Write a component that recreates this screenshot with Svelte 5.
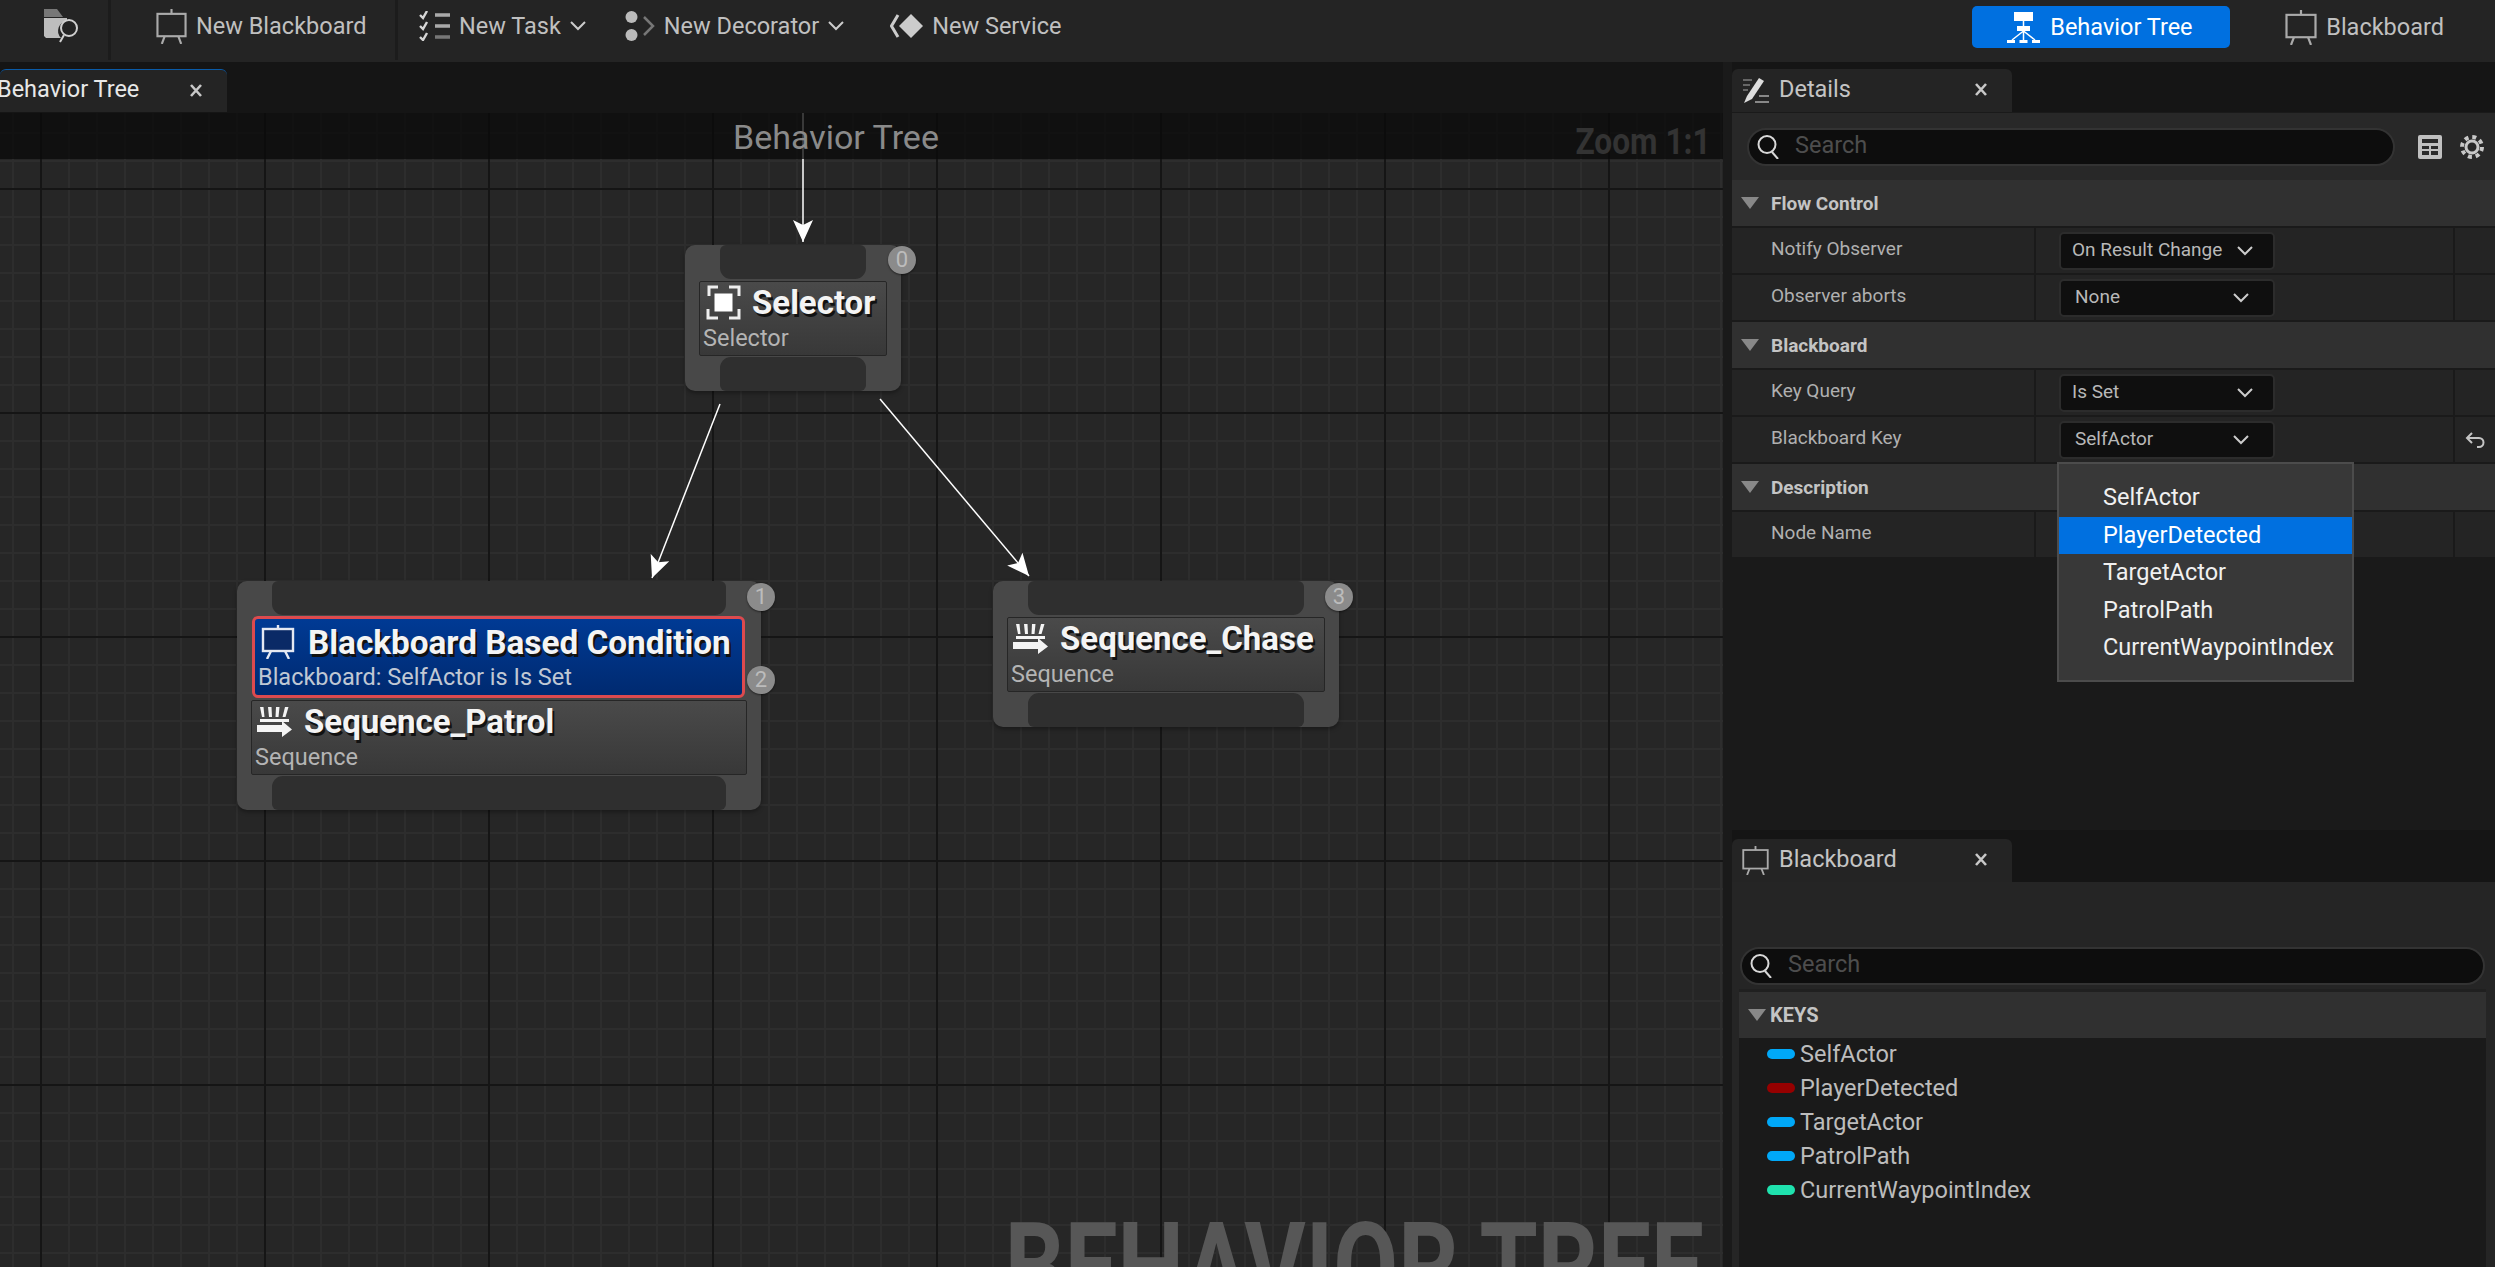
<script>
  const flowRows = [
    { label: "Notify Observer", value: "On Result Change" },
    { label: "Observer aborts", value: "None", alt: true },
  ];
  const bbRows = [
    { label: "Key Query", value: "Is Set" },
    { label: "Blackboard Key", value: "SelfActor", alt: true, reset: true },
  ];

  const options = ["SelfActor", "PlayerDetected", "TargetActor", "PatrolPath", "CurrentWaypointIndex"];

  const keys = [
    { name: "SelfActor", color: "#00a8f8" },
    { name: "PlayerDetected", color: "#960000" },
    { name: "TargetActor", color: "#00a8f8" },
    { name: "PatrolPath", color: "#00a8f8" },
    { name: "CurrentWaypointIndex", color: "#1fe2ae" },
  ];
</script>

{#snippet easel(w, h)}
  <svg width={w} height={h} viewBox="0 0 32 36" preserveAspectRatio="none" fill="none" stroke="#aaa" stroke-width="2.2">
    <path d="M16 0v5" />
    <rect x="1.5" y="5" width="29" height="23" />
    <path d="M9 28l-3 8M23 28l3 8" />
  </svg>
{/snippet}

{#snippet magnifier()}
  <svg width="24" height="24" viewBox="0 0 24 24" fill="none" stroke="#d8d8d8" stroke-width="2">
    <ellipse cx="10" cy="9.500" rx="8.500" ry="8.500" />
    <path d="M15 17l6 7" />
  </svg>
{/snippet}

{#snippet closeMark()}
  <svg class="x" width="12" height="13" viewBox="0 0 12 13" fill="none" stroke="#c8c8c8" stroke-width="2.600">
    <path d="M1 1l10 11M11 1L1 12" />
  </svg>
{/snippet}

{#snippet chevron()}
  <svg width="16" height="10" viewBox="0 0 16 10" fill="none" stroke="#ccc" stroke-width="2"><path d="M1 1l7 7 7-7" /></svg>
{/snippet}

{#snippet sequenceIcon()}
  <svg class="seq" width="35" height="30" viewBox="0 0 35 30" fill="#f4f4f4">
    <path d="M3 0h3.500l1 10H5zM11 0h3.500l.5 10h-3zM19 0h3.500l-1 10h-3zM28 0h3.500l-3 10h-3z" />
    <rect x="3" y="12" width="29" height="3" />
    <path d="M0 18h25v-4l10 8.500-10 7.500v-5H0z" />
  </svg>
{/snippet}

<div class="app">
  <header class="toolbar">
    <div class="tb-group first">
      <svg width="35" height="34" viewBox="0 0 35 34">
        <path d="M0 0h13l6 8H0z" fill="#777" />
        <path d="M0 9h23v3a10 10 0 0 0-6 17H2l-2-2z" fill="#bdbdbd" />
        <circle cx="25" cy="19" r="8" fill="none" stroke="#d0d0d0" stroke-width="2" />
        <path d="M20 26l-4 7" stroke="#d0d0d0" stroke-width="2" />
      </svg>
    </div>
    <div class="tb-group second">
      <button class="tb-btn">
        {@render easel(31, 35)}
        <span>New Blackboard</span>
      </button>
    </div>
    <div class="tb-group rest">
      <button class="tb-btn">
        <svg width="31" height="30" viewBox="0 0 31 30" fill="none">
          <path d="M1 4l3 3 4-7M1 15l3 3 4-7M1 26l3 3 4-7" stroke="#d6d6d6" stroke-width="2.400" />
          <path d="M16 4h15M16 15h15" stroke="#aaa" stroke-width="3.500" />
          <path d="M16 26h15" stroke="#777" stroke-width="3.500" />
        </svg>
        <span>New Task</span>
        {@render chevron()}
      </button>
      <button class="tb-btn">
        <svg width="30" height="30" viewBox="0 0 30 30">
          <circle cx="6.500" cy="6" r="6" fill="#bbb" />
          <circle cx="6.500" cy="24" r="6" fill="#bbb" />
          <path d="M19 6l9 9-9 9" fill="none" stroke="#777" stroke-width="2.500" />
        </svg>
        <span>New Decorator</span>
        {@render chevron()}
      </button>
      <button class="tb-btn service">
        <svg width="33" height="24" viewBox="0 0 33 24">
          <path d="M21 0l12 12-12 12-12-12z" fill="#ccc" />
          <path d="M8 1L1.500 12 8 23" fill="none" stroke="#ccc" stroke-width="3" />
        </svg>
        <span>New Service</span>
      </button>
    </div>
    <div class="modes">
      <button class="mode active">
        <svg width="33" height="31" viewBox="0 0 33 31" fill="#fff">
          <rect x="7" y="0" width="19" height="9" />
          <rect x="10" y="14" width="13" height="5" />
          <path d="M16.500 9v5M16.500 19L5 28M16.500 19v9M16.500 19L28 28" fill="none" stroke="#fff" stroke-width="1.500" />
          <rect x="0" y="28" width="8" height="3" />
          <rect x="12.500" y="28" width="8" height="3" />
          <rect x="25" y="28" width="8" height="3" />
        </svg>
        <span>Behavior Tree</span>
      </button>
      <button class="mode">
        {@render easel(32, 35)}
        <span>Blackboard</span>
      </button>
    </div>
  </header>

  <main class="workspace">
    <section class="graph-col">
      <div class="tabstrip">
        <div class="tab graph-tab">
          <span class="tab-title">Behavior Tree</span>
          {@render closeMark()}
        </div>
      </div>
      <div class="graph">
        <svg class="wires" width="1723" height="1155" viewBox="0 0 1723 1155">
          <defs>
            <marker id="head" markerWidth="24" markerHeight="20" refX="22" refY="10" orient="auto" markerUnits="userSpaceOnUse">
              <path d="M0 0L22 10L0 20L5 10z" fill="#fff" />
            </marker>
          </defs>
          <path d="M803 0V130" stroke="#fff" stroke-width="1.500" marker-end="url(#head)" />
          <path d="M720 292L652 466" stroke="#fff" stroke-width="1.500" marker-end="url(#head)" />
          <path d="M880 287L1029 464" stroke="#fff" stroke-width="1.500" marker-end="url(#head)" />
        </svg>

        <div class="graph-head">
          <span class="graph-title">Behavior Tree</span>
          <span class="zoom">Zoom 1:1</span>
        </div>
        <span class="watermark">BEHAVIOR TREE</span>

        <div class="node selector">
          <div class="slot"></div>
          <div class="inner">
            <div class="title-row">
              <svg class="sel-ic" width="35" height="35" viewBox="0 0 35 35" fill="none" stroke="#eee" stroke-width="3">
                <path d="M3 11V2h9M23 2h10v9M2 24v9h10M23 33h10v-9" />
                <rect x="8.500" y="8.500" width="18" height="18" fill="#fff" stroke="none" />
              </svg>
              <span class="title">Selector</span>
            </div>
            <div class="sub">Selector</div>
          </div>
          <div class="slot"></div>
          <span class="badge">0</span>
        </div>

        <div class="node patrol">
          <div class="slot"></div>
          <div class="deco">
            <div class="title-row">
              <svg class="deco-ic" width="34" height="34" viewBox="0 0 34 34" fill="#0a2a66" stroke="#e4e8f2" stroke-width="2.400">
                <path d="M17 0v4" />
                <rect x="2" y="4" width="30" height="22" />
                <path d="M10 26l-4 8M24 26l4 8" />
              </svg>
              <span class="title">Blackboard Based Condition</span>
            </div>
            <div class="sub">Blackboard: SelfActor is Is Set</div>
          </div>
          <div class="inner">
            <div class="title-row">
              {@render sequenceIcon()}
              <span class="title">Sequence_Patrol</span>
            </div>
            <div class="sub">Sequence</div>
          </div>
          <div class="slot"></div>
          <span class="badge">1</span>
          <span class="badge second-badge">2</span>
        </div>

        <div class="node chase">
          <div class="slot"></div>
          <div class="inner">
            <div class="title-row">
              {@render sequenceIcon()}
              <span class="title">Sequence_Chase</span>
            </div>
            <div class="sub">Sequence</div>
          </div>
          <div class="slot"></div>
          <span class="badge">3</span>
        </div>
      </div>
    </section>

    <aside class="side">
      <section class="details">
        <div class="tabstrip">
          <div class="tab side-tab">
            <svg width="27" height="26" viewBox="0 0 27 26" fill="none">
              <path d="M1 2h9M1 7h7M1 12h5" stroke="#666" stroke-width="1.800" />
              <path d="M5 18L17 0l5 3-12 18-8 4z" fill="#ddd" />
              <path d="M13 24h14M17 18h10" stroke="#888" stroke-width="1.800" />
            </svg>
            <span class="tab-title">Details</span>
            {@render closeMark()}
          </div>
        </div>
        <div class="panel">
          <div class="search-row">
            <div class="search">
              {@render magnifier()}
              <span>Search</span>
            </div>
            <svg width="24" height="24" viewBox="0 0 24 24">
              <rect width="24" height="24" rx="2" fill="#c0c0c0" />
              <path d="M4 4h16v4H4zM4 11h7v3H4zM13 11h7v3h-7zM4 16h7v4H4zM13 16h7v4h-7z" fill="#2a2a2a" />
            </svg>
            <svg class="gear" width="26" height="26" viewBox="0 0 26 26" fill="none" stroke="#c8c8c8">
              <circle cx="13" cy="13" r="6" stroke-width="3" />
              <circle cx="13" cy="13" r="10" stroke-width="4" stroke-dasharray="4 3.850" />
            </svg>
          </div>

          <div class="cat"><i class="tri"></i>Flow Control</div>
          {#each flowRows as row}
            <div class="row">
              <div class="r-label">{row.label}</div>
              <div class="r-value"><div class="combo" class:alt={row.alt}><span>{row.value}</span>{@render chevron()}</div></div>
              <div class="r-reset"></div>
            </div>
          {/each}

          <div class="cat"><i class="tri"></i>Blackboard</div>
          {#each bbRows as row}
            <div class="row">
              <div class="r-label">{row.label}</div>
              <div class="r-value"><div class="combo" class:alt={row.alt}><span>{row.value}</span>{@render chevron()}</div></div>
              <div class="r-reset">
                {#if row.reset}
                  <svg width="20" height="16" viewBox="0 0 20 16" fill="none" stroke="#c4c4c4" stroke-width="2"><path d="M7 1L2 6l5 5M2 6h12a4.500 4.500 0 0 1 0 9h-2" /></svg>
                {/if}
              </div>
            </div>
          {/each}

          <div class="cat"><i class="tri"></i>Description</div>
          <div class="row">
            <div class="r-label">Node Name</div>
            <div class="r-value"></div>
            <div class="r-reset"></div>
          </div>
        </div>

        <div class="dropdown">
          {#each options as opt, i}
            <div class="opt" class:sel={i === 1}>{opt}</div>
          {/each}
        </div>
      </section>

      <section class="blackboard-panel">
        <div class="tabstrip tall">
          <div class="tab side-tab">
            {@render easel(26, 29)}
            <span class="tab-title">Blackboard</span>
            {@render closeMark()}
          </div>
        </div>
        <div class="bb-body">
          <div class="bb-search">
            <div class="search">
              {@render magnifier()}
              <span>Search</span>
            </div>
          </div>
          <div class="bb-list">
            <div class="cat keys"><i class="tri"></i>KEYS</div>
            {#each keys as key}
              <div class="key">
                <i class="pill" style="background: {key.color}"></i>
                <span>{key.name}</span>
              </div>
            {/each}
          </div>
        </div>
      </section>
    </aside>
  </main>
</div>

<style>
  :global(body) {
    margin: 0;
    background: #151515;
  }
  .app {
    width: 2495px;
    height: 1267px;
    overflow: hidden;
    display: flex;
    flex-direction: column;
    font-family: Roboto, "Liberation Sans", sans-serif;
    color: #c0c0c0;
    background: #151515;
  }
  button {
    background: none;
    border: 0;
    padding: 0;
    font: inherit;
    color: inherit;
  }

  /* top bar */
  .toolbar {
    height: 62px;
    flex: none;
    display: flex;
    background: #242424;
    align-items: flex-start;
  }
  .tb-group {
    display: flex;
    align-items: center;
    height: 60px;
    box-sizing: border-box;
    padding-bottom: 8px;
  }
  .tb-group.first {
    width: 111px;
    padding-left: 44px;
    border-right: 3px solid #1c1c1c;
  }
  .tb-group.second {
    width: 287px;
    padding-left: 45px;
    border-right: 3px solid #1c1c1c;
  }
  .tb-group.rest {
    padding-left: 21px;
    gap: 39px;
  }
  .tb-btn {
    display: flex;
    align-items: center;
    gap: 9px;
    font-size: 23.500px;
    color: #c0c0c0;
    white-space: nowrap;
  }
  .tb-btn.service {
    margin-left: 7px;
  }
  .modes {
    margin-left: auto;
    display: flex;
    align-items: center;
    gap: 55px;
    padding: 6px 51px 0 0;
  }
  .mode {
    display: flex;
    align-items: center;
    gap: 9px;
    font-size: 23.500px;
    height: 42px;
    color: #c0c0c0;
  }
  .mode.active {
    width: 258px;
    background: #0070e0;
    color: #fff;
    border-radius: 5px;
    box-sizing: border-box;
    padding-left: 35px;
    gap: 10px;
  }

  /* layout */
  .workspace {
    flex: 1;
    min-height: 0;
    display: flex;
  }
  .graph-col {
    width: 1723px;
    flex: none;
    display: flex;
    flex-direction: column;
  }
  .side {
    flex: 1;
    display: flex;
    flex-direction: column;
    min-width: 0;
    padding-left: 9px;
    background: #1a1a1a;
  }
  .tabstrip {
    height: 50px;
    flex: none;
    display: flex;
    background: #151515;
    padding-top: 7px;
    box-sizing: border-box;
  }
  .tabstrip.tall {
    height: 52px;
    padding-top: 9px;
  }
  .tab {
    background: #242424;
    border-radius: 6px 6px 0 0;
    display: flex;
    align-items: center;
    box-sizing: border-box;
    height: 43px;
    position: relative;
  }
  .tab-title {
    font-size: 23.500px;
    color: #c4c4c4;
    white-space: nowrap;
    padding-bottom: 4px;
  }
  .x {
    position: absolute;
    top: 14px;
  }
  .graph-tab {
    width: 227px;
    border-top: 1px solid #0a5ba8;
    overflow: hidden;
  }
  .graph-tab .tab-title {
    margin-left: -3px;
    color: #e8e8e8;
  }
  .graph-tab .x {
    left: 190px;
  }
  .side-tab {
    width: 280px;
    padding-left: 10px;
    gap: 10px;
  }
  .side-tab .x {
    left: 243px;
  }

  /* graph */
  .graph {
    flex: 1;
    margin-top: 1px;
    position: relative;
    overflow: hidden;
    background-color: #262626;
    background-image:
      linear-gradient(90deg, #151515 2px, transparent 2px),
      linear-gradient(0deg, transparent calc(100% - 2px), #151515 calc(100% - 2px)),
      linear-gradient(90deg, #2d2d2d 2px, transparent 2px),
      linear-gradient(0deg, transparent calc(100% - 2px), #2d2d2d calc(100% - 2px));
    background-size: 224px 224px, 224px 224px, 28px 28px, 28px 28px;
    background-position: 40px 75px, 40px 75px, 12px 19px, 12px 19px;
  }
  .graph-head {
    height: 46px;
    background: rgba(10, 10, 10, 0.75);
    position: relative;
  }
  .graph-title {
    position: absolute;
    left: 733px;
    top: 4px;
    font-size: 34px;
    color: #8a8a8a;
    white-space: nowrap;
  }
  .zoom {
    position: absolute;
    right: 12px;
    top: 8px;
    font-size: 36px;
    font-weight: 700;
    color: #333;
    white-space: nowrap;
    transform: scale(0.88, 1.04);
    transform-origin: right center;
  }
  .watermark {
    position: absolute;
    right: 19px;
    top: 1094px;
    font-weight: 700;
    font-size: 120px;
    line-height: 1;
    transform: scaleX(0.784);
    transform-origin: right top;
    color: #575757;
    white-space: nowrap;
  }
  .wires {
    position: absolute;
    left: 0;
    top: -1px;
    pointer-events: none;
  }

  .node {
    position: absolute;
    background: #484848;
    border-radius: 10px;
    display: flex;
    flex-direction: column;
    justify-content: space-between;
    box-sizing: border-box;
    padding: 0 14px;
    box-shadow: 0 2px 4px rgba(0, 0, 0, 0.35);
  }
  .selector {
    left: 685px;
    top: 132px;
    width: 216px;
    height: 146px;
  }
  .patrol {
    left: 237px;
    top: 468px;
    width: 524px;
    height: 229px;
  }
  .chase {
    left: 993px;
    top: 468px;
    width: 346px;
    height: 146px;
  }
  .slot {
    height: 34px;
    background: #2f2f2f;
    flex: none;
    margin: 0 21px;
    border-radius: 6px 6px 11px 11px;
  }
  .slot:last-of-type {
    border-radius: 11px 11px 6px 6px;
  }
  .inner {
    height: 75px;
    background: linear-gradient(#4a4a4a, #383838);
    border: 1px solid #262626;
    border-radius: 2px;
    box-sizing: border-box;
    padding: 1px 3px 0;
    flex: none;
  }
  .title-row {
    display: flex;
    align-items: center;
    height: 40px;
    padding-left: 2px;
  }
  .title {
    font-weight: 700;
    font-size: 33px;
    color: #f4f4f4;
    text-shadow: 2px 3px 0 #111;
    white-space: nowrap;
    line-height: 1;
  }
  .sub {
    font-size: 23.500px;
    color: #b4b4b4;
    line-height: 26px;
    margin-top: 2px;
    white-space: nowrap;
  }
  .sel-ic {
    margin-right: 11px;
    margin-left: 1px;
    flex: none;
  }
  .seq {
    margin-right: 12px;
    flex: none;
  }
  .deco {
    height: 82px;
    background: linear-gradient(#003a94, #002a70);
    border: 3px solid #dd4a4e;
    border-radius: 6px;
    box-sizing: border-box;
    padding: 2px 3px 0;
    margin: 0 2px 0 1px;
    flex: none;
  }
  .deco .title-row {
    height: 42px;
    padding-left: 3px;
  }
  .deco .title {
    font-size: 33.300px;
  }
  .deco .sub {
    color: #c0c8d4;
    margin-top: 1px;
  }
  .deco-ic {
    margin-right: 13px;
    flex: none;
  }
  .badge {
    position: absolute;
    right: -14px;
    top: 2px;
    width: 28px;
    height: 28px;
    border-radius: 50%;
    background: #8b8b8b;
    color: #bcbcbc;
    font-size: 22px;
    line-height: 28px;
    text-align: center;
    box-shadow: 0 1px 2px rgba(0, 0, 0, 0.5);
  }
  .selector .badge {
    right: -15px;
    top: 1px;
  }
  .badge.second-badge {
    top: 85px;
  }

  /* details */
  .details {
    height: 768px;
    flex: none;
    position: relative;
    display: flex;
    flex-direction: column;
  }
  .panel {
    flex: 1;
    padding-top: 1px;
  }
  .search-row {
    height: 67px;
    background: #282828;
    display: flex;
    align-items: center;
    gap: 14px;
    padding: 0 0 0 15px;
    box-sizing: border-box;
  }
  .search {
    flex: 1;
    height: 38px;
    border-radius: 19px;
    background: #0d0d0d;
    border: 2px solid #333;
    display: flex;
    align-items: center;
    gap: 14px;
    padding-left: 8px;
    box-sizing: border-box;
    font-size: 23.500px;
    color: #4d4d4d;
  }
  .search span {
    padding-bottom: 4px;
  }
  .search-row .search {
    flex: none;
    width: 648px;
    margin-right: 9px;
  }
  .gear {
    margin-left: 3px;
  }
  .cat {
    height: 46px;
    background: #303030;
    display: flex;
    align-items: center;
    font-size: 19px;
    font-weight: 700;
    color: #c4c4c4;
    padding-left: 9px;
    margin-bottom: 2px;
    box-sizing: border-box;
  }
  .tri {
    width: 0;
    height: 0;
    border-left: 9px solid transparent;
    border-right: 9px solid transparent;
    border-top: 12px solid #888;
    margin-right: 12px;
  }
  .row {
    height: 45px;
    display: flex;
    background: #242424;
    margin-bottom: 2px;
    font-size: 19px;
  }
  .r-label {
    width: 304px;
    padding-left: 39px;
    box-sizing: border-box;
    line-height: 42px;
    color: #b0b0b0;
    border-right: 2px solid #1a1a1a;
    flex: none;
  }
  .r-value {
    width: 419px;
    flex: none;
    box-sizing: border-box;
    padding-left: 23px;
    display: flex;
    align-items: center;
    border-right: 2px solid #1a1a1a;
  }
  .r-reset {
    flex: 1;
    display: flex;
    align-items: center;
    padding-left: 10px;
  }
  .combo {
    width: 216px;
    height: 38px;
    box-sizing: border-box;
    background: #0f0f0f;
    border: 2px solid #2c2c2c;
    border-radius: 5px;
    display: flex;
    align-items: center;
    justify-content: space-between;
    padding: 0 20px 0 11px;
    color: #b8b8b8;
    white-space: nowrap;
  }
  .combo span {
    padding-bottom: 2px;
  }
  .combo.alt {
    padding: 0 24px 0 14px;
  }
  .dropdown {
    position: absolute;
    left: 325px;
    top: 400px;
    width: 297px;
    height: 220px;
    box-sizing: border-box;
    background: #383838;
    border: 2px solid #4c4c4c;
    padding: 15px 0;
    font-size: 23.500px;
    color: #f0f0f0;
  }
  .opt {
    height: 37.600px;
    line-height: 36px;
    padding-left: 44px;
    white-space: nowrap;
  }
  .opt.sel {
    background: #0070e0;
    color: #fff;
  }

  /* blackboard */
  .blackboard-panel {
    flex: 1;
    display: flex;
    flex-direction: column;
    min-height: 0;
  }
  .side-tab svg:first-child {
    flex: none;
    width: 27px;
  }
  .bb-body {
    flex: 1;
    background: #252525;
    display: flex;
    flex-direction: column;
  }
  .bb-search {
    height: 107px;
    flex: none;
    display: flex;
    align-items: flex-end;
    padding: 0 10px 4px 8px;
    box-sizing: border-box;
  }
  .bb-list {
    flex: 1;
    margin: 0 9px 0 7px;
    background: #1a1a1a;
    border-top: 3px solid #202020;
  }
  .cat.keys {
    margin-bottom: 0;
    font-size: 20px;
    padding-bottom: 0;
  }
  .cat.keys .tri {
    margin-right: 4px;
  }
  .key {
    display: flex;
    align-items: center;
    height: 34px;
    font-size: 23.500px;
    color: #bcbcbc;
    padding-left: 28px;
    gap: 5px;
    position: relative;
    top: -1px;
  }
  .key span {
    padding-bottom: 1px;
  }
  .pill {
    width: 28px;
    height: 10px;
    border-radius: 5px;
    flex: none;
  }
</style>
